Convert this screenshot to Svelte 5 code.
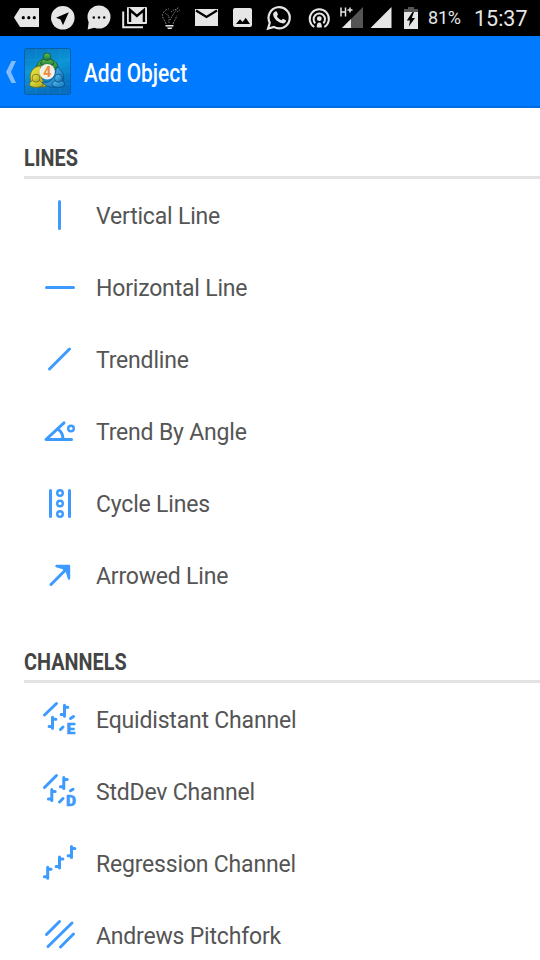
<script lang="ts">
  interface Item {
    label: string;
    icon: string;
  }

  interface Section {
    title: string;
    items: Item[];
  }

  const sections: Section[] = [
    {
      title: 'LINES',
      items: [
        { label: 'Vertical Line', icon: 'vertical' },
        { label: 'Horizontal Line', icon: 'horizontal' },
        { label: 'Trendline', icon: 'trend' },
        { label: 'Trend By Angle', icon: 'angle' },
        { label: 'Cycle Lines', icon: 'cycle' },
        { label: 'Arrowed Line', icon: 'arrow' },
      ],
    },
    {
      title: 'CHANNELS',
      items: [
        { label: 'Equidistant Channel', icon: 'equidistant' },
        { label: 'StdDev Channel', icon: 'stddev' },
        { label: 'Regression Channel', icon: 'regression' },
        { label: 'Andrews Pitchfork', icon: 'pitchfork' },
      ],
    },
  ];
</script>

{#snippet bar(x: number, y: number)}
  <path d="M{x} {y}v11M{x} {y + 2}h3.4M{x} {y + 9.4}h-3.4" stroke-width="3" />
{/snippet}

<div class="screen">
  <div class="statusbar">
    <svg class="cell" viewBox="0 0 36 36">
      <path d="M5 17.5L11 8H30V27H11Z" />
      <g fill="#000"><circle cx="14.3" cy="17.7" r="1.6" /><circle cx="19.8" cy="17.7" r="1.6" /><circle cx="25.3" cy="17.7" r="1.6" /></g>
    </svg>
    <svg class="cell" viewBox="0 0 36 36">
      <circle cx="17.8" cy="17.8" r="11.8" />
      <path d="M23.8 12.2L11 17.7L15.5 19.6L18 25.3Z" fill="#000" />
    </svg>
    <svg class="cell" viewBox="0 0 36 36">
      <circle cx="18" cy="17" r="11.5" />
      <path d="M8 20L6.7 29.5L16 27Z" />
      <g fill="#000"><circle cx="12.8" cy="17.5" r="1.2" /><circle cx="18" cy="17.5" r="1.2" /><circle cx="23.2" cy="17.5" r="1.2" /></g>
    </svg>
    <svg class="cell" viewBox="0 0 36 36">
      <rect x="10" y="7" width="20" height="17" rx="1" />
      <path d="M13 22V10L19.9 16L26.9 10V22" fill="none" stroke="#000" stroke-width="2.4" />
      <path d="M6.2 11.5V27.2H26" fill="none" stroke="#e6e6e6" stroke-width="2" />
    </svg>
    <svg class="cell" viewBox="0 0 36 36">
      <g fill="none" stroke="#777" stroke-width="1">
        <path d="M13 24C12.5 21 9.5 19 9.5 15.5A7 7 0 0 1 16 9M20 24C20.5 21 23.5 19 23.5 15.5" stroke-dasharray="2 1" />
        <path d="M16 23V16L12 13M17 20L21 13L25 8M18 12L22 9M22 10L26 7M24 12L27 10" stroke-dasharray="1.5 1" />
      </g>
      <path d="M12.5 25H20.5V26.5H12.5ZM14 27.5H19.5L18.5 29H15Z" />
    </svg>
    <svg class="cell" viewBox="0 0 36 36">
      <path d="M6 9H29V26H6Z" />
      <path d="M7 10.5L17.5 17L28 10.5" fill="none" stroke="#000" stroke-width="2.2" />
    </svg>
    <svg class="cell" viewBox="0 0 36 36">
      <rect x="8" y="8" width="19" height="19" rx="2" />
      <path d="M11 24L15 19.2L17.7 22L20.7 17.8L25 24Z" fill="#000" />
    </svg>
    <svg class="cell" viewBox="0 0 36 36">
      <path d="M7 28.7L8.8 22.7A10.6 10.6 0 1 1 12.8 26.9Z" fill="none" stroke="#e6e6e6" stroke-width="2.2" />
      <path d="M13.7 11.8C14.3 11 15.5 11 15.9 11.8L16.9 14.2C17 14.7 16.3 15.5 15.8 16C16.8 18 18.5 19.5 20.5 20.3L22 18.7L25 20.2C25.3 22.5 23 23.7 21.2 23.3C16.5 22.5 12.3 18 12.1 14.5C12.1 13.4 12.9 12.4 13.7 11.8Z" />
    </svg>
    <svg class="cell podcast" viewBox="0 0 36 36">
      <g fill="none" stroke="#e6e6e6" stroke-width="2">
        <path d="M13.3 27A9.6 9.6 0 1 1 23.3 27" />
        <path d="M14.3 23.3A5.7 5.7 0 1 1 22.3 23.3" />
      </g>
      <circle cx="18.3" cy="18.7" r="2.4" />
      <path d="M15.8 27.5Q15.5 22.5 18.3 22.5Q21 22.5 20.8 27.5Z" />
    </svg>
    <svg class="network" viewBox="0 0 26 36">
      <path d="M25 7V28H4Z" fill="#555" />
      <path d="M13 19V28H4Z" />
      <path d="M3 7.5V16.5M7.5 7.5V16.5M3 12H7.5M9.5 10H14.5M12 7.5V12.5" fill="none" stroke="#e6e6e6" stroke-width="1.5" />
    </svg>
    <svg class="signal" viewBox="0 0 22 36"><path d="M21.5 7V28H.5Z" /></svg>
    <svg class="battery" viewBox="0 0 14 36">
      <path d="M0 9H4V7H10V9H14V13H0Z" fill="#555" />
      <path d="M0 12H14V29H0Z" />
      <path d="M8.5 12L2.8 20.5H6L4.8 26.5L11 18H7.8L10 12Z" fill="#000" />
    </svg>
    <span class="percent">81%</span>
    <span class="clock">15:37</span>
  </div>

  <header class="toolbar">
    <svg class="back" viewBox="0 0 12 24"><path d="M2 12L7.5 1H12L7 12L12 23H7.5Z" /></svg>
    <svg class="logo" viewBox="0 0 48 48">
      <defs>
        <linearGradient id="sky" x1="0" y1="0" x2="0.3" y2="1">
          <stop offset="0" stop-color="#0875c3" />
          <stop offset="0.5" stop-color="#0b96d6" />
          <stop offset="1" stop-color="#086fbe" />
        </linearGradient>
        <linearGradient id="green" x1="0" y1="0" x2="0" y2="1">
          <stop offset="0" stop-color="#6cc04e" /><stop offset="1" stop-color="#15763a" />
        </linearGradient>
        <linearGradient id="yellow" x1="0" y1="0" x2="1" y2="1">
          <stop offset="0" stop-color="#f3ea45" /><stop offset="1" stop-color="#a8a520" />
        </linearGradient>
        <linearGradient id="blue" x1="0" y1="0" x2="1" y2="1">
          <stop offset="0" stop-color="#5cc4f3" /><stop offset="1" stop-color="#0a6db5" />
        </linearGradient>
      </defs>
      <rect x="0.5" y="0.5" width="46" height="46" rx="2" fill="url(#sky)" stroke="#075fa9" />
      <path d="M12 1V46M24 1V46M36 1V46M1 12H46M1 24H46M1 36H46" stroke="#35aee0" stroke-width=".5" opacity=".4" />
      <g stroke-width=".8">
        <g fill="url(#green)" stroke="#14562f">
          <path d="M12.5 23C11 16 16 10.5 23 10.5C30 10.5 35 16 34.5 23L29 21C26 16 20 16 12.500 23Z" />
          <path d="M16.5 16Q17 10.500 23 10.500Q29 10.500 30 16Q23.500 20 16.5 16Z" />
          <circle cx="23" cy="8.7" r="3.700" />
        </g>
        <g fill="url(#yellow)" stroke="#6c6c18">
          <path d="M17 18C9 18 5 25 6.500 32C9 39 17 40 24 38C19 34 15 28 17 18Z" />
          <path d="M5.500 37.500Q5.500 32 11.500 32Q18.500 32 19 37.500Q12 41.500 5.500 37.500Z" />
          <circle cx="12" cy="30.200" r="4" />
        </g>
        <g fill="url(#blue)" stroke="#074e88">
          <path d="M32.500 19C39 22 41 29 39 34C34 41 24 41 18 34C26 36 31 31 32.500 19Z" />
          <path d="M28 37.500Q28 32 34.500 32Q40.500 32 41 37.500Q35 41.500 28 37.500Z" />
          <circle cx="34.500" cy="30.200" r="4" />
        </g>
      </g>
      <circle cx="23.2" cy="23.800" r="7.700" fill="#f2eee9" />
      <text class="logo-digit" x="23.200" y="28.800" text-anchor="middle">4</text>
    </svg>
    <h1>Add Object</h1>
  </header>

  {#each sections as section}
    <section>
      <div class="heading"><h2>{section.title}</h2></div>
      <ul>
        {#each section.items as item}
          <li>
            <svg class="icon" viewBox="0 0 48 48">
              {#if item.icon === 'vertical'}
                <path d="M23.5 9.5V36.5" />
              {:else if item.icon === 'horizontal'}
                <path d="M10.5 23.5H37.5" />
              {:else if item.icon === 'trend'}
                <path d="M13.5 33L33.5 13" />
              {:else if item.icon === 'angle'}
                <path d="M28 14.8L10 31.5H35.5" />
                <path d="M21.5 21Q27 24 27 31" />
                <circle class="ring" cx="35" cy="20.5" r="2.8" />
              {:else if item.icon === 'cycle'}
                <path d="M14.5 10.5V36.5M33.5 10.5V36.5" />
                <circle class="ring" cx="24" cy="13" r="2.8" />
                <circle class="ring" cx="24" cy="23.5" r="2.8" />
                <circle class="ring" cx="24" cy="34" r="2.8" />
              {:else if item.icon === 'arrow'}
                <path d="M15 32.5L31 16.5" />
                <path class="solid" d="M20.5 14H33V26.5L31 20L27 16Z" stroke-width="2.4" />
              {:else if item.icon === 'equidistant'}
                <path d="M8.5 19L20.5 7.5M34.5 22.5L37.5 20.5M24.5 33.5L27 31" />
                {@render bar(16.5, 21.2)}
                {@render bar(28.5, 9.2)}
                <text x="30.5" y="38">E</text>
              {:else if item.icon === 'stddev'}
                <path d="M8.5 19.5L20.5 7.5M34.5 22.8L37 21.3M23.5 34L27 30.5" />
                {@render bar(15.8, 21.6)}
                {@render bar(27.8, 9.4)}
                <text x="30" y="38.3">D</text>
              {:else if item.icon === 'regression'}
                {@render bar(11.7, 27.3)}
                {@render bar(23.5, 17)}
                {@render bar(35.5, 6.4)}
              {:else}
                <path d="M10.5 22.5L23.5 9.5M12 34.5L36 11M24.5 35L37.5 22" />
              {/if}
            </svg>
            <span class="label">{item.label}</span>
          </li>
        {/each}
      </ul>
    </section>
  {/each}
</div>

<style>
  :global(body) {
    overflow: hidden;
  }

  .screen {
    width: 540px;
    height: 960px;
    overflow: hidden;
    background: #fff;
    font-family: Roboto, sans-serif;
  }

  .statusbar {
    display: flex;
    align-items: center;
    height: 36px;
    padding-left: 9px;
    background: #000;
    color: #e6e6e6;
    fill: #e6e6e6;
  }

  .statusbar svg {
    height: 36px;
    flex-shrink: 0;
  }

  .statusbar .cell {
    width: 36px;
  }

  .statusbar .podcast {
    margin-left: 4px;
  }

  .network {
    width: 26px;
    margin-left: 1px;
  }

  .signal {
    width: 22px;
    margin-left: 6px;
  }

  .battery {
    width: 14px;
    margin-left: 12px;
  }

  .percent {
    width: 34px;
    margin-left: 10px;
    font-size: 18px;
    letter-spacing: -0.2px;
    line-height: 36px;
  }

  .clock {
    margin-left: 12px;
    padding-top: 2px;
    font-size: 21.5px;
    line-height: 36px;
  }

  .toolbar {
    display: flex;
    align-items: center;
    box-sizing: border-box;
    height: 72px;
    padding-left: 4px;
    background: #007aff;
    border-bottom: 2px solid #006ce2;
  }

  .back {
    width: 12px;
    height: 24px;
    margin-top: 1px;
    fill: #80bcff;
  }

  .logo {
    width: 48px;
    height: 48px;
    margin: 1px 0 0 8px;
  }

  .logo-digit {
    font-size: 14px;
    font-weight: 700;
    fill: #ee8c32;
  }

  h1 {
    margin: 3px 0 0 12px;
    color: #fff;
    font-size: 25.5px;
    font-weight: 500;
    transform: scaleX(0.82);
    transform-origin: left;
  }

  .heading {
    display: flex;
    align-items: flex-end;
    box-sizing: border-box;
    height: 71px;
    margin: 0 0 1px 24px;
    border-bottom: 3px solid #e3e3e3;
  }

  h2 {
    margin: 0 0 4px;
    color: #444;
    font-size: 24.5px;
    line-height: 28px;
    font-weight: 700;
    transform: scaleX(0.81);
    transform-origin: left;
  }

  ul {
    margin: 0;
    padding: 0;
    list-style: none;
  }

  li {
    display: flex;
    align-items: center;
    height: 72px;
    padding-left: 36px;
  }

  .icon {
    width: 48px;
    height: 48px;
    margin-right: 12px;
    fill: none;
    stroke: #3d9aff;
    stroke-width: 3;
    stroke-linecap: round;
    stroke-linejoin: round;
  }

  .icon .ring {
    stroke-width: 2.4;
  }

  .icon .solid {
    fill: #3d9aff;
  }

  .icon text {
    fill: #3d9aff;
    stroke-width: 0.5;
    font-size: 15.5px;
    font-weight: 900;
  }

  .label {
    color: #555;
    font-size: 23px;
    letter-spacing: -0.19px;
    white-space: nowrap;
  }
</style>
